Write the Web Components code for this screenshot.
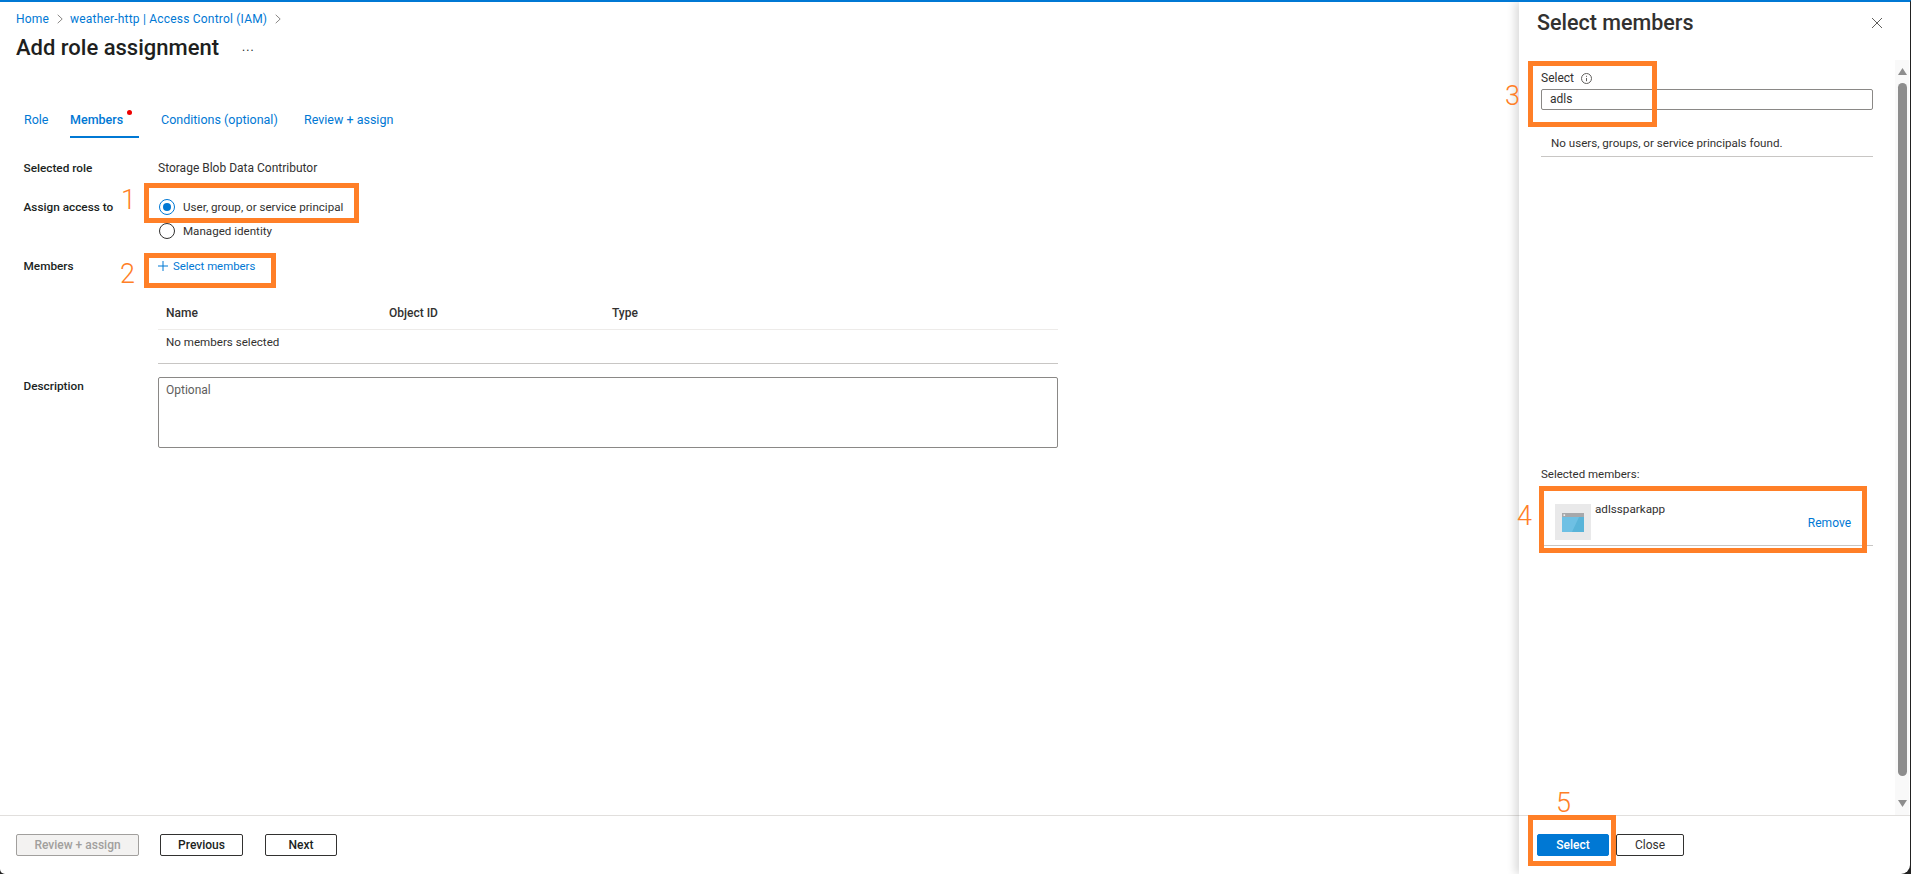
<!DOCTYPE html>
<html><head><meta charset="utf-8"><style>
html,body{margin:0;height:100%;background:#fff;overflow:hidden}
body{font:12px/16px Roboto,"Open Sans",sans-serif;color:#323130}
</style></head><body>
<iam-app>
  <blade-main>
    <azure-breadcrumb></azure-breadcrumb>
    <page-title>Add role assignment</page-title>
    <wizard-tabs></wizard-tabs>
    <form-row label="Selected role" h="24" style="margin-top:18px"><span>Storage Blob Data Contributor</span></form-row>
    <form-row label="Assign access to" h="24" style="margin-top:15px"><radio-opt checked>User, group, or service principal</radio-opt></form-row>
    <form-row h="23"><radio-opt>Managed identity</radio-opt></form-row>
    <form-row label="Members" h="24" style="margin-top:12px"><add-link>Select members</add-link></form-row>
    <form-row h="65" style="margin-top:21px"><members-table></members-table></form-row>
    <form-row label="Description" h="71" top style="margin-top:13px"><desc-box>Optional</desc-box></form-row>
    <action-bar>
      <az-btn kind="disabled" w="123">Review + assign</az-btn>
      <az-btn w="83" style="margin-left:21px">Previous</az-btn>
      <az-btn w="72" style="margin-left:22px">Next</az-btn>
    </action-bar>
  </blade-main>
  <side-panel></side-panel>
  <orange-mark x="144" y="183" w="215" h="40"></orange-mark>
  <orange-mark x="144" y="253" w="132" h="35"></orange-mark>
  <orange-mark x="1528" y="61" w="129" h="66"></orange-mark>
  <orange-mark x="1539" y="486" w="328" h="67"></orange-mark>
  <orange-mark x="1528" y="815" w="88" h="51"></orange-mark>
  <orange-num x="121" y="187">1</orange-num>
  <orange-num x="120" y="261">2</orange-num>
  <orange-num x="1505" y="83">3</orange-num>
  <orange-num x="1517" y="503">4</orange-num>
  <orange-num x="1556" y="790">5</orange-num>
</iam-app>
<script>
function def(name, css, html, init){
  customElements.define(name, class extends HTMLElement{
    connectedCallback(){
      if(this.shadowRoot) return;
      const s=this.attachShadow({mode:'open'});
      s.innerHTML='<style>'+css+'</style>'+(typeof html==='function'?html(this):html);
      if(init) init(this);
    }
  });
}
const chev='<svg width="6" height="10" viewBox="0 0 6 10" fill="none" stroke="#8a8886"><path d="M.7 .8 5.2 5 .7 9.2"/></svg>';
def('iam-app',':host{display:flex;position:relative;width:1911px;height:874px;box-sizing:border-box;border-top:2px solid #0078d4;border-right:1px solid #222;overflow:hidden;background:#222}','<slot></slot>');
def('blade-main',':host{display:flex;flex-direction:column;flex:1;min-width:0;background:#fff;border-bottom-left-radius:5px}','<slot></slot>');
def('azure-breadcrumb',':host{display:flex;align-items:center;height:16px;margin:9px 0 0 16px;color:#0078d4;letter-spacing:.2px}svg{display:block}span:nth-of-type(1){width:41px}span:nth-of-type(2){margin-left:7px;margin-right:8px}',
  '<span>Home</span>'+chev+'<span>weather-http | Access Control (IAM)</span>'+chev);
def('page-title',':host{display:flex;align-items:center;height:28px;margin:7px 0 0 16px;font-size:22px;font-weight:500;line-height:28px;color:#201f1e}i{font-style:normal;font-weight:400;font-size:12px;margin-left:23px;letter-spacing:1px;position:relative;top:-1px}','<slot></slot><i>...</i>');
def('wizard-tabs',':host{display:flex;height:34px;margin-top:42px;padding-left:24px;color:#0078d4;font-size:12.5px}a{position:relative;flex:none;line-height:32px;height:34px;box-sizing:border-box}a.on{font-weight:500}a.on b{position:absolute;left:0;bottom:0;width:69px;height:2px;background:#0078d4}a.on::after{content:"";position:absolute;width:5px;height:5px;border-radius:50%;background:#e00;left:57px;top:6px}',
  '<a style="width:46px">Role</a><a class="on" style="width:91px">Members<b></b></a><a style="width:143px">Conditions (optional)</a><a>Review + assign</a>');
def('form-row',':host{display:flex;margin-left:23.5px;width:1034.5px}b{width:134.5px;flex:none;font-weight:500;font-size:11.8px;color:#201f1e}.c{flex:1;display:flex;align-items:center}',
  e=>`<b style="line-height:${e.hasAttribute('top')?'18px':e.getAttribute('h')+'px'}">${e.getAttribute('label')||''}</b><div class="c" style="height:${e.getAttribute('h')}px"><slot></slot></div>`);
def('radio-opt',':host{display:flex;align-items:center;gap:8px;font-size:11.6px}span{width:16px;height:16px;margin-left:1px;border-radius:50%;box-sizing:border-box;border:1px solid #323130;display:flex;align-items:center;justify-content:center}:host([checked]) span{border-color:#0078d4}:host([checked]) span::after{content:"";width:8px;height:8px;border-radius:50%;background:#0078d4}','<span></span><slot></slot>');
def('add-link',':host{display:flex;align-items:center;color:#0078d4;gap:5px;font-size:11.4px}svg{display:block}','<svg width="10" height="10" viewBox="0 0 10 10" stroke="#0078d4" fill="none"><path d="M5 0v10M0 5h10"/></svg><slot></slot>');
def('members-table',':host{display:block;width:100%;align-self:flex-start}.h{display:grid;grid-template-columns:223px 223px 1fr;padding-left:8px;height:31px;line-height:28px;font-weight:500;border-bottom:1px solid #edebe9;box-sizing:border-box}.h+div{padding-left:8px;height:34px;line-height:25px;font-size:11.6px;border-bottom:1px solid #c8c6c4;box-sizing:border-box}',
  '<div class="h"><span>Name</span><span>Object ID</span><span>Type</span></div><div>No members selected</div>');
def('desc-box',':host{display:block;width:100%;height:71px;box-sizing:border-box;border:1px solid #8a8886;border-radius:2px;padding:4px 7px;color:#605e5c}','<slot></slot>');
def('action-bar',':host{display:flex;align-items:flex-start;margin-top:auto;height:59px;box-sizing:border-box;border-top:1px solid #e1dfdd;padding:18px 0 0 16px}','<slot></slot>');
def('az-btn',':host{display:flex;align-items:center;justify-content:center;height:22px;box-sizing:border-box;border:1px solid #323130;border-radius:2px;font-weight:500;color:#201f1e;background:#fff}:host([kind=disabled]){background:#f3f2f1;border-color:#a19f9d;color:#a19f9d}:host([kind=primary]){background:#0078d4;border-color:#0078d4;color:#fff}:host([kind=plain]){color:#323130;font-weight:400}','<slot></slot>',e=>{e.style.width=e.getAttribute('w')+'px'});
def('side-panel',':host{display:flex;flex-direction:column;width:391px;flex:none;background:#fff;box-shadow:-4px 0 8px rgba(0,0,0,.14);position:relative;z-index:1;border-bottom-right-radius:9px}header{display:flex;justify-content:space-between;align-items:center;height:42px;padding:0 27px 0 18px;font-size:21.5px;font-weight:500;color:#323130}svg{display:block}'+
  '.body{flex:1;display:flex;min-height:0}.col{flex:1;display:flex;flex-direction:column;padding:26px 0 0 22px;min-width:0}.lab{display:flex;align-items:center;gap:7px;height:16px}.in{width:332px;height:21px;box-sizing:border-box;border:1px solid #8a8886;border-radius:2px;padding-left:8px;line-height:19px;margin-top:3px}.none{width:332px;height:47px;box-sizing:border-box;border-bottom:1px solid #c8c6c4;padding:25px 0 0 10px;line-height:16px;font-size:11.6px}.sel{margin-top:309px;font-size:11.5px}.item{position:relative;width:332px;height:58px;box-sizing:border-box;border-bottom:1px solid #c8c6c4;margin-top:6px}.av{position:absolute;left:14px;top:16px;width:36px;height:36px;background:#e9e9ea;display:flex;align-items:center;justify-content:center}.nm{position:absolute;left:54px;top:13px;font-size:11.7px}.rm{position:absolute;right:22px;top:27px;color:#0078d4}'+
  '.sb{width:14px;flex:none;margin-right:1px;display:flex;flex-direction:column;align-items:center;margin-top:16px;background:#f9f9f9}.up{margin-top:8px}.th{width:9px;height:693px;background:#8d8d8d;border-radius:4.5px;margin:8px 0 0;flex:none}.dn{margin-top:auto;margin-bottom:8px}'+
  'footer{display:flex;height:59px;box-sizing:border-box;border-top:1px solid #e1dfdd;padding:18px 0 0 18px;gap:7px}',
  '<header><span>Select members</span><svg width="12" height="12" viewBox="0 0 12 12" stroke="#605e5c" fill="none"><path d="M1 1l10 10M11 1 1 11"/></svg></header>'+
  '<div class="body"><div class="col"><div class="lab"><span>Select</span><svg width="11" height="11" viewBox="0 0 11 11" fill="none" stroke="#605e5c"><circle cx="5.5" cy="5.5" r="5"/><path d="M5.5 5v3.2M5.5 2.8v1"/></svg></div><div class="in">adls</div><div class="none">No users, groups, or service principals found.</div>'+
  '<div class="sel">Selected members:</div><div class="item"><div class="av"><svg width="22" height="19" viewBox="0 0 22 19"><rect width="22" height="19" fill="#6ec0e4"/><path d="M22 4h-5L10 19h12z" fill="#59b4d9"/><rect width="22" height="4" fill="#a6a8ab"/><rect x="1.5" y="1.4" width="1.6" height="1.4" fill="#fff"/></svg></div><span class="nm">adlssparkapp</span><span class="rm">Remove</span></div></div>'+
  '<div class="sb"><svg class="up" width="9" height="7"><path d="M0 7 4.5 0 9 7z" fill="#8d8d8d"/></svg><div class="th"></div><svg class="dn" width="9" height="7"><path d="M0 0 4.5 7 9 0z" fill="#8d8d8d"/></svg></div></div>'+
  '<footer><az-btn kind="primary" w="72">Select</az-btn><az-btn kind="plain" w="68">Close</az-btn></footer>');
def('orange-mark',':host{position:absolute;box-sizing:border-box;border:5px solid #ff7f27;z-index:2}','',e=>{
  const a=k=>e.getAttribute(k);e.style.cssText=`left:${a('x')}px;top:${a('y')-2}px;width:${a('w')}px;height:${a('h')}px`});
def('orange-num',':host{position:absolute;font:300 27px/26px Roboto,sans-serif;color:#ff7f27;z-index:2}','<slot></slot>',e=>{
  e.style.left=e.getAttribute('x')+'px';e.style.top=(e.getAttribute('y')-2)+'px'});
</script>
</body></html>
